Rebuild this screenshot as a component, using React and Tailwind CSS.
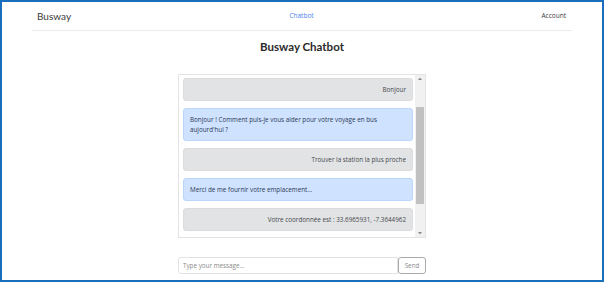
import React from 'react';

const messages = [
  { from: 'user', text: 'Bonjour' },
  { from: 'bot', text: "Bonjour ! Comment puis-je vous aider pour votre voyage en bus aujourd'hui ?" },
  { from: 'user', text: 'Trouver la station la plus proche' },
  { from: 'bot', text: 'Merci de me fournir votre emplacement...' },
  { from: 'user', text: 'Votre coordonnée est : 33.6965931, -7.3644962' },
];

const Bubble = ({ from, text }) => (
  <div
    className={`rounded-[3px] border px-[6px] py-[5.5px] font-['Open_Sans',sans-serif] text-[6.3px] leading-[10px] ${
      from === 'user'
        ? 'border-[#dcdcde] bg-[#e2e3e5] text-right text-[#45494d]'
        : 'border-[#bcd5fb] bg-[#cfe2ff] text-left text-[#2b3a55]'
    }`}
  >
    {text}
  </div>
);

const Scrollbar = () => (
  <div className="flex w-[10px] flex-col items-center bg-[#f1f1f1]">
    <svg width="6" height="6" viewBox="0 0 6 6" className="mt-[1px]">
      <path d="M1 4 L3 1.5 L5 4 Z" fill="#8a8a8a" />
    </svg>
    <div className="mt-[25px] h-[97px] w-[8px] bg-[#c1c1c1]" />
    <div className="flex-1" />
    <svg width="6" height="6" viewBox="0 0 6 6" className="mb-[1px]">
      <path d="M1 2 L3 4.5 L5 2 Z" fill="#8a8a8a" />
    </svg>
  </div>
);

export default function App() {
  return (
    <div
      className="flex h-[282px] w-[604px] flex-col border-2 border-[#1a6fbd] bg-white"
      style={{ fontFamily: 'Lato, "Open Sans", sans-serif' }}
    >
      <nav className="mx-[30px] flex h-[29px] items-center justify-between border-b border-[#ececec] pl-[5px] pr-[6px]">
        <span className="w-[60px] text-[10px] text-[#3a3a3a]">Busway</span>
        <span className="font-['Open_Sans',sans-serif] text-[6.5px] text-[#4b82f0]">Chatbot</span>
        <span className="w-[60px] text-right font-['Open_Sans',sans-serif] text-[6.5px] text-[#3a3a3a]">Account</span>
      </nav>

      <h1 className="mt-[8px] text-center text-[11.5px] font-bold leading-[16px] text-[#2a2a2a]">
        Busway Chatbot
      </h1>

      <div className="mx-auto mt-[19px] flex h-[164px] w-[248px] border border-[#e3e3e3] bg-white">
        <div className="flex flex-1 flex-col gap-[7px] pl-[4px] pr-[2px] pt-[3px]">
          {messages.map((m, i) => (
            <Bubble key={i} {...m} />
          ))}
        </div>
        <Scrollbar />
      </div>

      <div className="mx-auto mt-[19px] flex h-[17px] w-[248px]">
        <input
          className="flex-1 rounded-l-[3px] border border-[#e3e3e3] px-[4px] font-['Open_Sans',sans-serif] text-[6.3px] text-[#333] placeholder:text-[#8a8a8a] outline-none"
          placeholder="Type your message..."
        />
        <button className="w-[28px] rounded-[3px] border border-[#a9a9a9] font-['Open_Sans',sans-serif] text-[6.3px] text-[#8a8a8a]">
          Send
        </button>
      </div>
    </div>
  );
}
